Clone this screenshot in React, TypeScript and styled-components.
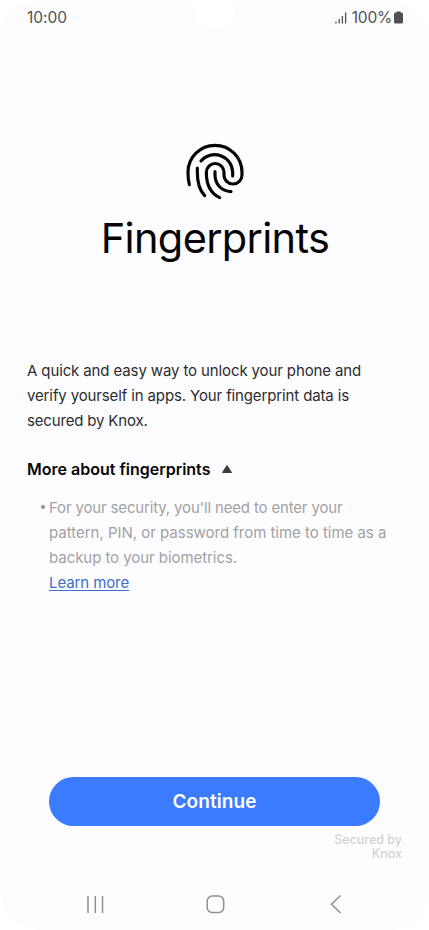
import styled, { createGlobalStyle } from "styled-components";

const GlobalStyle = createGlobalStyle`
  * {
    box-sizing: border-box;
  }
  body {
    margin: 0;
    background: #ffffff;
    font-family: "Inter", "Roboto", sans-serif;
  }
`;

const Screen = styled.div`
  position: relative;
  width: 429px;
  height: 930px;
  display: flex;
  flex-direction: column;
  background: #fdfdff;
  border-radius: 40px;
  overflow: hidden;
`;

const Notch = styled.svg`
  position: absolute;
  top: 0;
  left: 187px;
`;

const StatusBar = styled.header`
  height: 35px;
  padding: 0 26px 0 27px;
  display: flex;
  align-items: center;
  justify-content: space-between;
  color: #505053;
  font-size: 15.5px;
`;

const Clock = styled.span`
  letter-spacing: -0.05px;
`;

const StatusIcons = styled.div`
  display: flex;
  align-items: center;
  letter-spacing: -0.2px;
`;

const SignalIcon = styled.svg`
  margin-right: 5px;
`;

const BatteryIcon = styled.svg`
  margin-left: 2px;
`;

const Hero = styled.section`
  height: 323px;
  padding-top: 107px;
  display: flex;
  flex-direction: column;
  align-items: center;
`;

const Title = styled.h1`
  margin: 10px 0 0;
  padding-left: 1px;
  font-size: 41.5px;
  line-height: 52px;
  font-weight: 400;
  letter-spacing: -0.65px;
  color: #050505;
  white-space: nowrap;
`;

const Content = styled.main`
  flex: 1;
  padding: 0 27px;
`;

const Line = styled.span<{ $spacing?: number }>`
  display: block;
  white-space: nowrap;
  letter-spacing: ${(props) => props.$spacing ?? 0}px;
`;

const Description = styled.p`
  margin: 0;
  font-size: 15px;
  line-height: 25px;
  color: #2c2c2e;
`;

const MoreToggle = styled.button`
  margin: 23px 0 0;
  padding: 0;
  border: 0;
  background: none;
  display: flex;
  align-items: center;
  gap: 12px;
  height: 25px;
  font-family: inherit;
  font-size: 16px;
  font-weight: 600;
  color: #050505;
`;

const List = styled.ul`
  margin: 14px 0 0;
  padding: 0 0 0 13px;
  list-style: none;
`;

const Item = styled.li`
  display: flex;
  font-size: 15px;
  line-height: 25px;
  color: #a2a2a4;
`;

const Bullet = styled.span`
  flex: none;
  width: 4px;
  height: 4px;
  margin: 10px 4px 0 1px;
  border-radius: 50%;
  background: #929294;
`;

const LearnMore = styled.a`
  display: inline-block;
  color: #3c6ecb;
  letter-spacing: -0.1px;
  text-decoration: underline;
  text-decoration-thickness: 1px;
  text-underline-offset: 2px;
`;

const Footer = styled.footer`
  height: 153px;
  display: flex;
  flex-direction: column;
`;

const ContinueButton = styled.button`
  width: 331px;
  height: 49px;
  margin-left: 49px;
  padding: 0;
  flex: none;
  border: 0;
  border-radius: 25px;
  background: #3a7bff;
  color: #ffffff;
  font-family: inherit;
  font-size: 19px;
  font-weight: 600;
  letter-spacing: 0.1px;
`;

const Knox = styled.div`
  margin: 7px 27px 0 0;
  font-size: 12.5px;
  line-height: 14px;
  font-weight: 500;
  text-align: right;
  color: #d3d3d5;
`;

const NavBar = styled.nav`
  margin-top: auto;
  height: 52px;
  padding: 0 84px;
  display: flex;
  justify-content: space-between;
`;

const App = () => {
  return (
    <>
      <GlobalStyle />
      <Screen>
        <Notch width="56" height="30" viewBox="0 0 56 30">
          <path
            d="M0 0C5 0 7 4 8 11C10 22 17 30 28 30C39 30 45 22 47 11C48 4 51 0 56 0Z"
            fill="#ffffff"
          />
        </Notch>
        <StatusBar>
          <Clock>10:00</Clock>
          <StatusIcons>
            <SignalIcon width="12" height="12" viewBox="0 0 12 12">
              <path
                d="M1 9.5V11.5M4.2 7V11.5M7.4 4V11.5M10.6 0.5V11.5"
                stroke="#505053"
                strokeWidth="1.3"
              />
            </SignalIcon>
            100%
            <BatteryIcon width="9" height="13" viewBox="0 0 9 13">
              <path
                d="M2.5 0.5H6.5V1.5H7.5Q9 1.5 9 3V11Q9 12.5 7.5 12.5H1.5Q0 12.5 0 11V3Q0 1.5 1.5 1.5H2.5Z"
                fill="#505053"
              />
            </BatteryIcon>
          </StatusIcons>
        </StatusBar>
        <Hero>
          <svg
            width="60"
            height="60"
            viewBox="30 21 180 180"
            fill="none"
            stroke="#050505"
            strokeWidth="9.5"
            strokeLinecap="round"
          >
            <path d="M43 149C40 138 39 125 39 112A81 81 0 0 1 201 112V120A27 27 0 0 1 147 120V112A26.5 26.5 0 0 0 94 112C94 145 105 175 134 188" />
            <path d="M78 78A54 54 0 0 1 173 112V123" />
            <path d="M67 99V112C67 145 72 165 89 182" />
            <path d="M120 110V118C120 150 140 168 168 170" />
          </svg>
          <Title>Fingerprints</Title>
        </Hero>
        <Content>
          <Description>
            <Line $spacing={-0.12}>A quick and easy way to unlock your phone and</Line>
            <Line $spacing={-0.13}>verify yourself in apps. Your fingerprint data is</Line>
            <Line $spacing={-0.17}>secured by Knox.</Line>
          </Description>
          <MoreToggle>
            <Line>More about fingerprints</Line>
            <svg width="10" height="8" viewBox="0 0 10 8">
              <path d="M5 0.5L9.5 7.5H0.5Z" fill="#3c3c3e" stroke="#3c3c3e" strokeLinejoin="round" />
            </svg>
          </MoreToggle>
          <List>
            <Item>
              <Bullet />
              <div>
                <Line $spacing={-0.16}>For your security, you'll need to enter your</Line>
                <Line $spacing={-0.02}>pattern, PIN, or password from time to time as a</Line>
                <Line $spacing={-0.06}>backup to your biometrics.</Line>
                <LearnMore>Learn more</LearnMore>
              </div>
            </Item>
          </List>
        </Content>
        <Footer>
          <ContinueButton>Continue</ContinueButton>
          <Knox>
            Secured by
            <br />
            Knox
          </Knox>
          <NavBar>
            <svg width="22" height="52" viewBox="84 878 22 52">
              <path d="M88 896V913M95.3 896V913M102.5 896V913" stroke="#909092" strokeWidth="1.5" />
            </svg>
            <svg width="22" height="52" viewBox="204 878 22 52">
              <rect x="207.2" y="896" width="16.5" height="16.5" rx="5" fill="none" stroke="#909092" strokeWidth="1.5" />
            </svg>
            <svg width="22" height="52" viewBox="323 878 22 52">
              <path d="M340.5 895.5L331.5 904.3L340.5 913" fill="none" stroke="#909092" strokeWidth="1.5" />
            </svg>
          </NavBar>
        </Footer>
      </Screen>
    </>
  );
};

export default App;
